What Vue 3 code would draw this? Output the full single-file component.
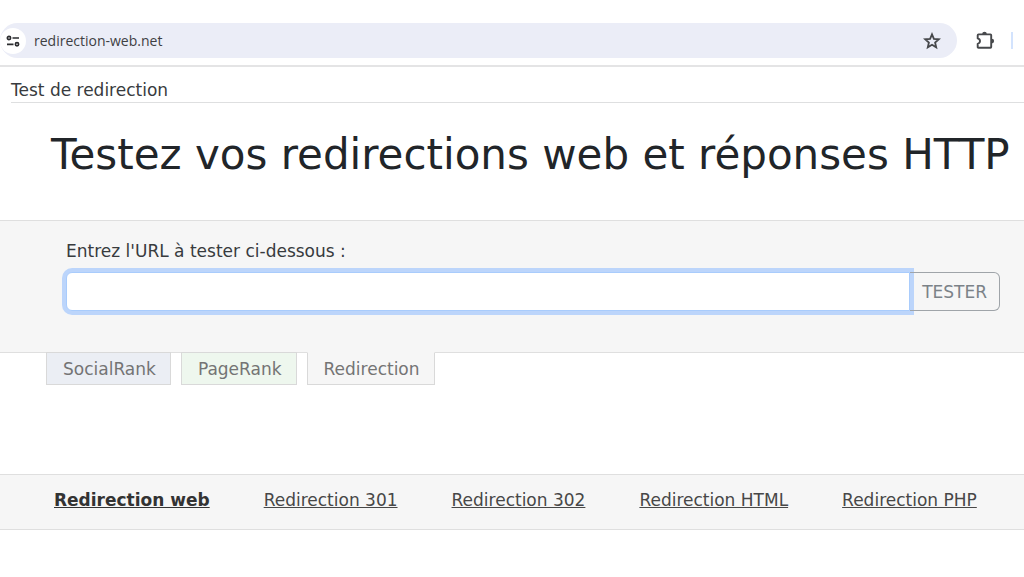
<script setup>
import { ref } from 'vue'

const url = ref('')
const tabs = [
  { name: 'SocialRank', tone: 'blue' },
  { name: 'PageRank', tone: 'green' },
  { name: 'Redirection', tone: 'current' },
]
const links = ['Redirection web', 'Redirection 301', 'Redirection 302', 'Redirection HTML', 'Redirection PHP']
</script>

<template>
  <div class="page">
    <div class="toolbar">
      <div class="address">
        <button class="site" type="button" aria-label="Informations du site">
          <svg width="14" height="14" viewBox="0 0 14 14" fill="none" stroke="#2b2c2f" stroke-width="1.7">
            <circle cx="3" cy="4" r="1.6" />
            <path d="M6.5 4H13M1 10.3H7.5" />
            <circle cx="11" cy="10.3" r="1.6" />
          </svg>
        </button>
        <span class="host">redirection-web.net</span>
        <button class="icon" type="button" aria-label="Ajouter aux favoris">
          <svg width="18" height="18" viewBox="0 0 18 18" fill="none" stroke="#46484b" stroke-width="1.8">
            <path d="M9 2.4L10.9 6.9L15.8 7.3L12.1 10.5L13.2 15.3L9 12.8L4.8 15.3L5.9 10.5L2.2 7.3L7.1 6.9Z" />
          </svg>
        </button>
      </div>
      <button class="icon" type="button" aria-label="Extensions">
        <svg width="20" height="20" viewBox="0 0 20 20" fill="none" stroke="#46484b" stroke-width="1.9" stroke-linejoin="round">
          <path d="M3.5 3.4H15.4Q16.2 3.4 16.2 4.2V16Q16.2 16.8 15.4 16.8H3.5Q2.7 16.8 2.7 16V12.8Q5 12.2 5 10.1Q5 8 2.7 7.4V4.2Q2.7 3.4 3.5 3.4Z" />
          <path d="M7.2 3A2.3 2.3 0 0 1 11.8 3ZM16.8 7.8A2.3 2.3 0 0 1 16.8 12.4Z" fill="#46484b" stroke="none" />
        </svg>
      </button>
      <span class="divider"></span>
    </div>

    <p class="crumb">Test de redirection</p>
    <h1>Testez vos redirections web et réponses HTTP</h1>

    <form class="tester" @submit.prevent>
      <label for="url">Entrez l'URL à tester ci-dessous :</label>
      <div class="group">
        <input id="url" v-model="url" type="text" autocomplete="off">
        <button type="submit">TESTER</button>
      </div>
    </form>

    <nav class="tabs" aria-label="Outils">
      <a v-for="t in tabs" :key="t.name" href="#" :class="t.tone">{{ t.name }}</a>
    </nav>

    <nav class="links" aria-label="Types de redirection">
      <a v-for="(l, i) in links" :key="l" href="#" :class="{ active: i === 0 }">{{ l }}</a>
    </nav>
  </div>
</template>

<style>
body {
  background: #fff;
}
</style>

<style scoped>
.page {
  font: 17px/24px Verdana, "DejaVu Sans", sans-serif;
  color: #383b3e;
  overflow-x: clip;
}
.page * {
  box-sizing: border-box;
}
.toolbar {
  display: flex;
  align-items: center;
  padding: 23px 11px 7px 0;
  border-bottom: 2px solid #e4e4e5;
}
.address {
  flex: 1;
  display: flex;
  align-items: center;
  height: 35px;
  margin-right: 18px;
  padding-right: 16px;
  background: #ebedf7;
  border-radius: 18px;
}
.site,
.icon {
  display: flex;
  align-items: center;
  justify-content: center;
  padding: 0;
  border: 0;
  background: none;
}
.site {
  width: 26px;
  height: 26px;
  border-radius: 50%;
  background: #fff;
}
.host {
  flex: 1;
  margin-left: 8px;
  font: 14px/20px "Segoe UI", "Open Sans", sans-serif;
  color: #3e4043;
}
.divider {
  width: 2px;
  height: 17px;
  margin-left: 16px;
  background: #d3e3fd;
}
.crumb {
  margin: 0 0 0 11px;
  padding: 11px 0 0;
  border-bottom: 1px solid #dedfe0;
}
h1 {
  margin: 0;
  padding: 27px 0 40px 51px;
  font-size: 42px;
  line-height: 50px;
  font-weight: 400;
  color: #212529;
  white-space: nowrap;
}
.tester {
  padding: 18px 24px 41px 66px;
  background: #f6f6f6;
  border: solid #dfdfdf;
  border-width: 1px 0;
}
.tester label {
  display: block;
  margin-bottom: 9px;
}
.group {
  display: flex;
}
.group input {
  flex: 1;
  min-width: 0;
  height: 39px;
  padding: 6px 12px;
  font: inherit;
  background: #fff;
  border: 1px solid #a9ccfc;
  border-radius: 6px 0 0 6px;
  outline: 0;
  box-shadow: 0 0 0 4px #bcd5fb;
}
.group button {
  height: 39px;
  padding: 0 12px;
  font: inherit;
  color: #7b8288;
  background: none;
  border: 1px solid #9fa4a9;
  border-left: 0;
  border-radius: 0 6px 6px 0;
}
.tabs {
  display: flex;
  gap: 10px;
  margin-top: -1px;
  padding-left: 46px;
}
.tabs a {
  padding: 4px 14px 3px 16px;
  color: #747474;
  text-decoration: none;
  border: 1px solid #d9d9d9;
}
.tabs .blue {
  background: #ebeef4;
}
.tabs .green {
  background: #eef7ee;
}
.tabs .current {
  background: #f6f6f6;
  border-top-color: #f6f6f6;
}
.links {
  display: flex;
  gap: 54px;
  margin-top: 89px;
  padding: 13px 0 17px 54px;
  background: #f6f6f6;
  border: solid #dfdfdf;
  border-width: 1px 0;
  white-space: nowrap;
}
.links a {
  color: #474747;
}
.links .active {
  font-weight: 700;
  color: #333;
}
</style>
